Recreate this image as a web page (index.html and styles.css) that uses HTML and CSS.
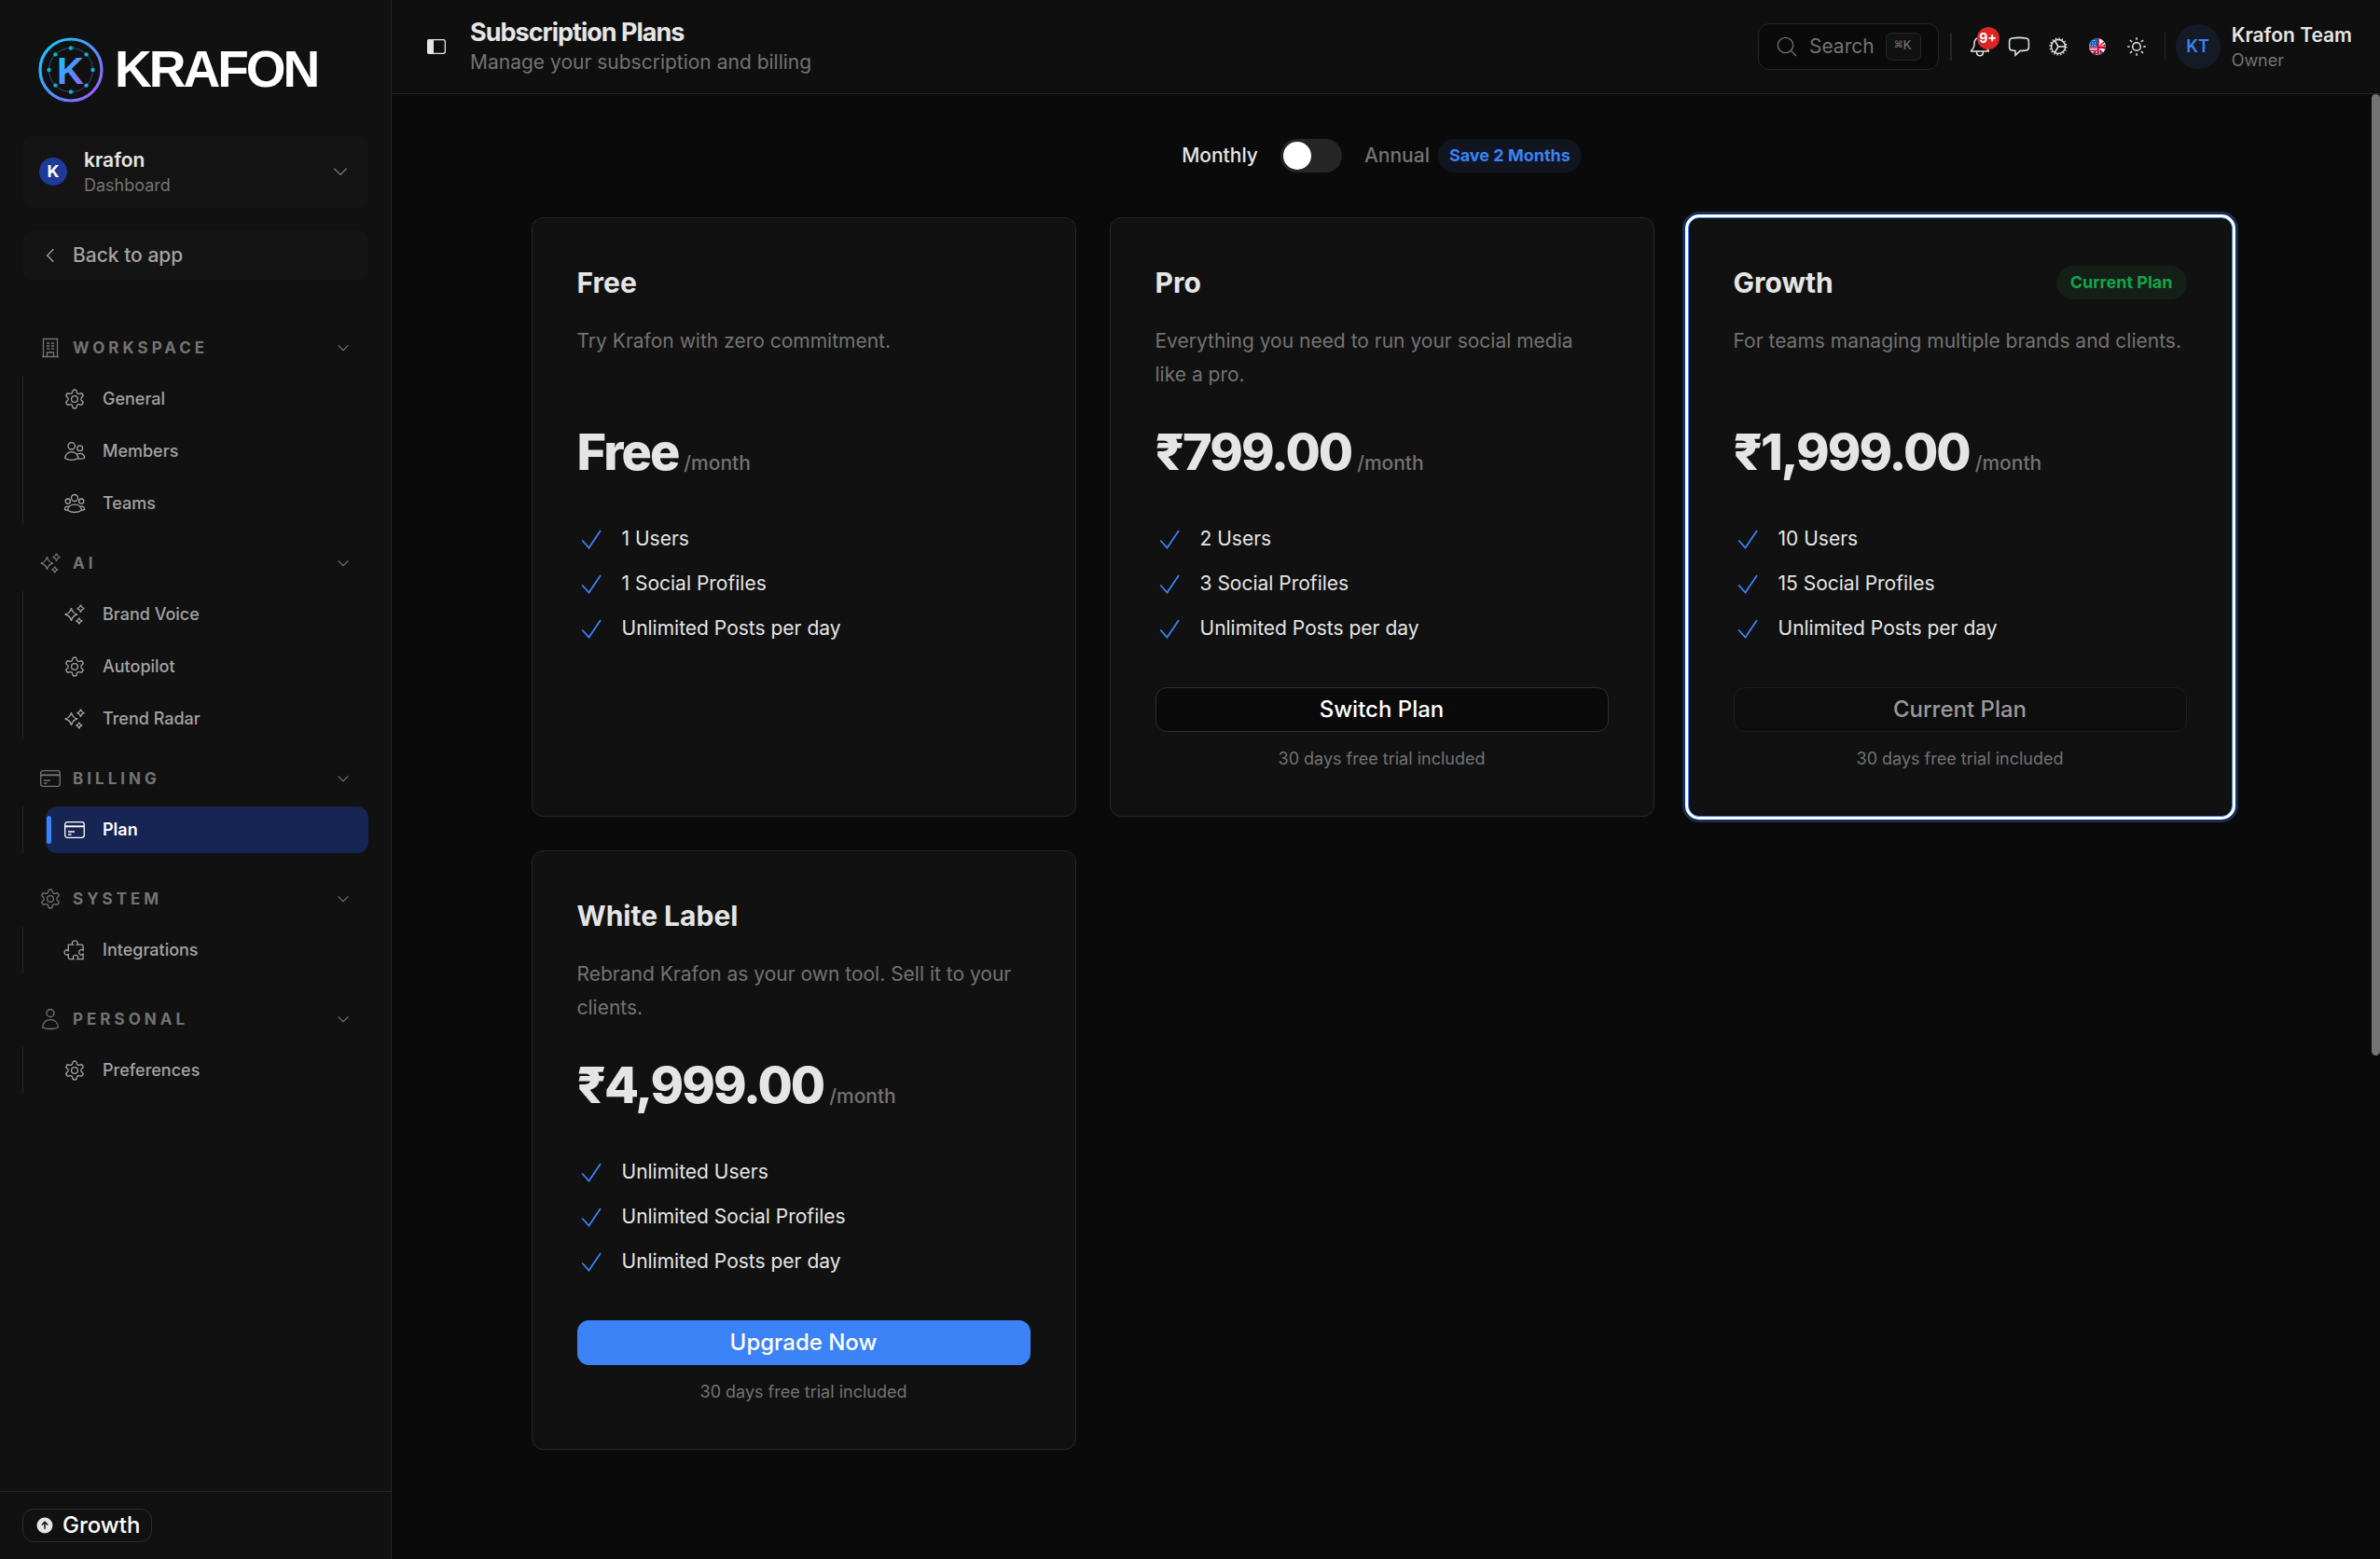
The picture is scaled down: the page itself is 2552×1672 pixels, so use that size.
FILE: index.html
```html
<!DOCTYPE html>
<html lang="en">
<head>
<meta charset="utf-8">
<meta name="viewport" content="width=device-width, initial-scale=1">
<title>Subscription Plans</title>
<link rel="stylesheet" href="styles.css">
</head>
<body>
<svg class="sprite" aria-hidden="true">
  <defs>
    <linearGradient id="brand" x1="0" y1="0" x2="1" y2="1">
      <stop offset="0" stop-color="#06d6ff"/><stop offset=".5" stop-color="#4d94ff"/><stop offset="1" stop-color="#a855f7"/>
    </linearGradient>
    <clipPath id="round"><circle cx="12" cy="12" r="9"/></clipPath>
  </defs>
  <symbol id="cog" viewBox="0 0 24 24"><path d="M12.22 2h-.44a2 2 0 0 0-2 2v.18a2 2 0 0 1-1 1.73l-.43.25a2 2 0 0 1-2 0l-.15-.08a2 2 0 0 0-2.73.73l-.22.38a2 2 0 0 0 .73 2.73l.15.1a2 2 0 0 1 1 1.72v.51a2 2 0 0 1-1 1.74l-.15.09a2 2 0 0 0-.73 2.73l.22.38a2 2 0 0 0 2.73.73l.15-.08a2 2 0 0 1 2 0l.43.25a2 2 0 0 1 1 1.73V20a2 2 0 0 0 2 2h.44a2 2 0 0 0 2-2v-.18a2 2 0 0 1 1-1.73l.43-.25a2 2 0 0 1 2 0l.15.08a2 2 0 0 0 2.73-.73l.22-.39a2 2 0 0 0-.73-2.73l-.15-.08a2 2 0 0 1-1-1.74v-.5a2 2 0 0 1 1-1.74l.15-.09a2 2 0 0 0 .73-2.73l-.22-.38a2 2 0 0 0-2.73-.73l-.15.08a2 2 0 0 1-2 0l-.43-.25a2 2 0 0 1-1-1.73V4a2 2 0 0 0-2-2z"/><circle cx="12" cy="12" r="3.4"/></symbol>
  <symbol id="building" viewBox="0 0 24 24"><path d="M4.500 21.500v-19h15v19M3 21.500h18M8.500 21.500V17h7v4.500M12 17v-1.500"/><path d="M8 7h3.200M13 7h3.200M8 10h3.200M13 10h3.200M8 13h3.200M13 13h3.200"/></symbol>
  <symbol id="members" viewBox="0 0 24 24"><circle cx="8.700" cy="6.300" r="3.700"/><path d="M1.800 19.500c0-4 3-6.800 7-6.800s7 2.800 7 6.800c-2 1.200-4.500 1.800-7 1.800s-5-.6-7-1.800z"/><circle cx="17.700" cy="8.700" r="2.900"/><path d="M14.600 15.200c4-1.800 8-.2 8 4-1.800 1-4.200 1.200-6.800.7"/></symbol>
  <symbol id="teams" viewBox="0 0 24 24"><circle cx="12" cy="6" r="3.500"/><circle cx="4.800" cy="9.600" r="2.600"/><circle cx="19.200" cy="9.600" r="2.600"/><path d="M4.500 19.200c.5-3.600 3.500-6 7.500-6s7 2.400 7.500 6c-2 1.600-4.700 2.300-7.500 2.300s-5.500-.7-7.500-2.300z"/><path d="M5.800 14.800c-2.700 0-4.400 1.400-4.400 3.600.9.6 1.900.9 3.100.9M18.200 14.800c2.700 0 4.400 1.400 4.400 3.600-.9.600-1.900.9-3.100.9"/></symbol>
  <symbol id="sparkles" viewBox="0 0 24 24"><path d="M8.500 5c.8 4.400 2.400 6.100 6.500 7-4.100.9-5.700 2.600-6.500 7-.8-4.400-2.400-6.100-6.800-7 4.400-.9 6-2.600 6.800-7zM18.500 1.500c.5 2.600 1.300 3.600 4 4.100-2.700.5-3.500 1.500-4 4.200-.5-2.700-1.300-3.700-4-4.200 2.700-.5 3.500-1.500 4-4.100zM16.800 15.500c.4 2.100 1.100 2.900 3.400 3.400-2.300.5-3 1.300-3.400 3.500-.4-2.200-1.100-3-3.400-3.500 2.300-.5 3-1.300 3.400-3.400z"/></symbol>
  <symbol id="card" viewBox="0 0 24 24"><rect x="1.700" y="3.700" width="20.600" height="16.600" rx="2.500"/><path d="M1.700 8.300h20.600" stroke-width="1.900"/><path d="M5 14h7M5 17h3.500"/></symbol>
  <symbol id="puzzle" viewBox="0 0 24 24"><path d="M5.300 6.200h4.900C8.600 4.500 9.600 1.800 12.300 1.800s3.700 2.700 2.100 4.400h5.100c.9 0 1.600.7 1.600 1.600v4.400c-1.600-1.500-4.400-.7-4.400 2s2.800 3.500 4.400 2v5.400h-6.200c1.500-1.700.7-4.200-1.900-4.200s-3.400 2.500-1.900 4.200H6.900c-.9 0-1.600-.7-1.600-1.600v-3.400c-1.600 1.200-4.200.6-4.200-2.100s2.600-3.500 4.200-2z"/></symbol>
  <symbol id="person" viewBox="0 0 24 24"><circle cx="12" cy="5.500" r="4"/><path d="M3.700 21c0-5 3.300-8.300 8.300-8.300s8.300 3.300 8.300 8.300c-2.400 1-5.200 1.500-8.300 1.500s-5.900-.5-8.300-1.500z"/></symbol>
  <symbol id="down" viewBox="0 0 24 24"><path d="M4 8l8 8 8-8"/></symbol>
  <symbol id="left" viewBox="0 0 24 24"><path d="M16 4l-8 8 8 8"/></symbol>
  <symbol id="check" viewBox="0 0 24 24"><path d="M2.200 13.500l7.300 8L22 3"/></symbol>
</svg>

<div class="app">
  <aside class="sidebar">
    <a class="brand" href="#">
      <svg class="brand-mark" viewBox="0 0 70 70" aria-hidden="true">
        <circle cx="35" cy="35" r="33" fill="none" stroke="url(#brand)" stroke-width="3.200"/>
        <circle cx="35" cy="35" r="23.500" fill="none" stroke="url(#brand)" stroke-width="1" opacity=".45"/>
        <g fill="#06b6d4"><circle cx="35" cy="11.500" r="2.200"/><circle cx="35" cy="58.500" r="2.200"/><circle cx="11.500" cy="35" r="2.200"/><circle cx="58.500" cy="35" r="2.200"/><circle cx="18.400" cy="18.400" r="2.200"/><circle cx="51.600" cy="18.400" r="2.200"/><circle cx="18.400" cy="51.600" r="2.200"/><circle cx="51.600" cy="51.600" r="2.200"/></g>
        <text class="brand-letter" x="20" y="50" fill="url(#brand)">K</text>
      </svg>
      <span class="brand-name">KRAFON</span>
    </a>

    <button class="workspace" type="button">
      <span class="workspace-avatar">K</span>
      <span class="stack"><strong class="workspace-name">krafon</strong><span class="caption">Dashboard</span></span>
      <svg class="icon icon-20 muted"><use href="#down"/></svg>
    </button>

    <a class="back" href="#"><svg class="icon icon-20"><use href="#left"/></svg>Back to app</a>

    <nav class="nav" aria-label="Settings">
      <section class="group group-long">
        <button class="group-head" type="button"><svg class="icon"><use href="#building"/></svg><span>WORKSPACE</span><svg class="icon icon-16"><use href="#down"/></svg></button>
        <div class="group-list">
          <a class="item" href="#"><svg class="icon"><use href="#cog"/></svg>General</a>
          <a class="item" href="#"><svg class="icon"><use href="#members"/></svg>Members</a>
          <a class="item" href="#"><svg class="icon"><use href="#teams"/></svg>Teams</a>
        </div>
      </section>
      <section class="group group-long">
        <button class="group-head" type="button"><svg class="icon"><use href="#sparkles"/></svg><span>AI</span><svg class="icon icon-16"><use href="#down"/></svg></button>
        <div class="group-list">
          <a class="item" href="#"><svg class="icon"><use href="#sparkles"/></svg>Brand Voice</a>
          <a class="item" href="#"><svg class="icon"><use href="#cog"/></svg>Autopilot</a>
          <a class="item" href="#"><svg class="icon"><use href="#sparkles"/></svg>Trend Radar</a>
        </div>
      </section>
      <section class="group">
        <button class="group-head" type="button"><svg class="icon"><use href="#card"/></svg><span>BILLING</span><svg class="icon icon-16"><use href="#down"/></svg></button>
        <div class="group-list">
          <a class="item item-active" href="#" aria-current="page"><svg class="icon"><use href="#card"/></svg>Plan</a>
        </div>
      </section>
      <section class="group">
        <button class="group-head" type="button"><svg class="icon"><use href="#cog"/></svg><span>SYSTEM</span><svg class="icon icon-16"><use href="#down"/></svg></button>
        <div class="group-list">
          <a class="item" href="#"><svg class="icon"><use href="#puzzle"/></svg>Integrations</a>
        </div>
      </section>
      <section class="group">
        <button class="group-head" type="button"><svg class="icon"><use href="#person"/></svg><span>PERSONAL</span><svg class="icon icon-16"><use href="#down"/></svg></button>
        <div class="group-list">
          <a class="item" href="#"><svg class="icon"><use href="#cog"/></svg>Preferences</a>
        </div>
      </section>
    </nav>

    <div class="sidebar-foot">
      <a class="plan-pill" href="#">
        <svg class="plan-pill-icon" viewBox="0 0 18 18" aria-hidden="true"><circle cx="9" cy="9" r="8.500" fill="#e5e5e5"/><path d="M9 12.800V5.500M5.800 8.500L9 5.300l3.200 3.200" fill="none" stroke="#111" stroke-width="1.500"/></svg>
        Growth
      </a>
    </div>
  </aside>

  <div class="content">
    <header class="topbar">
      <button class="plain" type="button" aria-label="Toggle sidebar">
        <svg class="panel-icon" viewBox="0 0 20 16"><rect x=".7" y=".7" width="18.600" height="14.600" rx="2" fill="none" stroke="#e5e5e5" stroke-width="1.300"/><path d="M0 2a2 2 0 0 1 2-2h5v16H2a2 2 0 0 1-2-2z" fill="#e5e5e5"/></svg>
      </button>
      <div class="heading">
        <h1 class="title">Subscription Plans</h1>
        <p class="subtitle">Manage your subscription and billing</p>
      </div>
      <button class="search" type="button">
        <svg class="icon" viewBox="0 0 24 24"><circle cx="10.500" cy="10.500" r="8.200"/><path d="M16.500 16.500l5.500 5.500"/></svg>
        <span>Search</span>
        <kbd class="kbd">⌘K</kbd>
      </button>
      <span class="divider divider-wide"></span>
      <div class="tools">
        <button class="plain tool" type="button" aria-label="Notifications">
          <svg class="icon" viewBox="0 0 24 24"><path d="M12 2.500c-3.800 0-6 2.500-6 6.200 0 3.900-1.300 5.800-3.200 7.300v1h18.400v-1c-1.900-1.500-3.200-3.400-3.200-7.300 0-3.700-2.200-6.200-6-6.200zM8.500 17.500c0 2.500 1.500 4.200 3.500 4.200s3.500-1.700 3.500-4.200"/></svg>
          <span class="count">9+</span>
        </button>
        <button class="plain tool" type="button" aria-label="Messages">
          <svg class="icon" viewBox="0 0 24 24"><path d="M4.500 2.900c5-.7 10-.7 15 0 1.700.2 2.900 1.600 2.900 3.300v6.600c0 1.700-1.200 3.100-2.900 3.300-2 .3-4.200.5-6.500.5l-5 4.700v-4.800c-1.200 0-2.400-.2-3.500-.4-1.700-.2-2.900-1.600-2.900-3.300V6.200c0-1.700 1.200-3.100 2.900-3.300z"/></svg>
        </button>
        <button class="plain tool" type="button" aria-label="Settings">
          <svg class="icon" viewBox="0 0 24 24"><circle cx="12" cy="12" r="7.500"/><circle cx="12" cy="12" r="8.900" stroke-width="1.400" stroke-dasharray="1.400 2.100"/><path d="M12 12h7.500M12 12L8.200 5.500M12 12l-3.800 6.500"/></svg>
        </button>
        <button class="plain tool" type="button" aria-label="Language: English">
          <svg class="flag" viewBox="0 0 24 24"><g clip-path="url(#round)"><path d="M0 0h24v24H0z" fill="#f5f5f5"/><path d="M3 3h9v9H3zM14.500 3H21v4zM22 8.500v2.500h-5zM14.500 21h6l-6-4.500zM22 15.500V14h-4zM10.500 16v6L5 20z" fill="#0a56b5"/><path d="M12 3h1.800v18H12zM12 11.500h9V14h-9zM3 12.500h9v1.500H3zM3 15.500h9v1.500H3zM3 18.500h9V20H3z" fill="#d80027"/><path d="M15 10.800L21.500 5M14.500 15.500l6 5.500" stroke="#d80027" stroke-width="1.400"/><path d="M5 5.500h6M3.500 8h7M3.500 10.500h7" stroke="#fff" stroke-width="1.200" stroke-dasharray="1.200 1.600"/></g></svg>
        </button>
        <button class="plain tool" type="button" aria-label="Theme">
          <svg class="icon" viewBox="0 0 24 24"><circle cx="12" cy="12" r="4.300"/><path d="M12 2.200v2.600M12 19.200v2.600M2.200 12h2.600M19.200 12h2.600M5 5l2 2M17 17l2 2M5 19l2-2M17 7l2-2" stroke-width="1.600"/></svg>
        </button>
      </div>
      <span class="divider"></span>
      <button class="plain account" type="button">
        <span class="account-avatar">KT</span>
        <span class="stack"><strong class="account-name">Krafon Team</strong><span class="caption">Owner</span></span>
      </button>
    </header>

    <main class="main">
      <div class="billing">
        <label for="cycle">Monthly</label>
        <input class="switch" type="checkbox" role="switch" id="cycle">
        <div class="annual"><label for="cycle" class="muted">Annual</label><span class="badge badge-blue">Save 2 Months</span></div>
      </div>

      <div class="plans">
        <article class="plan">
          <header class="plan-head"><h2 class="plan-name">Free</h2></header>
          <p class="plan-text">Try Krafon with zero commitment.</p>
          <p class="price"><strong class="amount">Free</strong><span class="period">/month</span></p>
          <ul class="features">
            <li><svg class="check"><use href="#check"/></svg>1 Users</li>
            <li><svg class="check"><use href="#check"/></svg>1 Social Profiles</li>
            <li><svg class="check"><use href="#check"/></svg>Unlimited Posts per day</li>
          </ul>
        </article>

        <article class="plan">
          <header class="plan-head"><h2 class="plan-name">Pro</h2></header>
          <p class="plan-text">Everything you need to run your social media like a pro.</p>
          <p class="price"><strong class="amount">₹799.00</strong><span class="period">/month</span></p>
          <ul class="features">
            <li><svg class="check"><use href="#check"/></svg>2 Users</li>
            <li><svg class="check"><use href="#check"/></svg>3 Social Profiles</li>
            <li><svg class="check"><use href="#check"/></svg>Unlimited Posts per day</li>
          </ul>
          <button class="action" type="button">Switch Plan</button>
          <p class="trial">30 days free trial included</p>
        </article>

        <article class="plan plan-current">
          <header class="plan-head"><h2 class="plan-name">Growth</h2><span class="badge badge-green">Current Plan</span></header>
          <p class="plan-text">For teams managing multiple brands and clients.</p>
          <p class="price"><strong class="amount">₹1,999.00</strong><span class="period">/month</span></p>
          <ul class="features">
            <li><svg class="check"><use href="#check"/></svg>10 Users</li>
            <li><svg class="check"><use href="#check"/></svg>15 Social Profiles</li>
            <li><svg class="check"><use href="#check"/></svg>Unlimited Posts per day</li>
          </ul>
          <button class="action" type="button" disabled>Current Plan</button>
          <p class="trial">30 days free trial included</p>
        </article>

        <article class="plan">
          <header class="plan-head"><h2 class="plan-name">White Label</h2></header>
          <p class="plan-text">Rebrand Krafon as your own tool. Sell it to your clients.</p>
          <p class="price"><strong class="amount">₹4,999.00</strong><span class="period">/month</span></p>
          <ul class="features">
            <li><svg class="check"><use href="#check"/></svg>Unlimited Users</li>
            <li><svg class="check"><use href="#check"/></svg>Unlimited Social Profiles</li>
            <li><svg class="check"><use href="#check"/></svg>Unlimited Posts per day</li>
          </ul>
          <button class="action action-primary" type="button">Upgrade Now</button>
          <p class="trial">30 days free trial included</p>
        </article>
      </div>
      <span class="scroll-thumb"></span>
    </main>
  </div>
</div>
</body>
</html>
```
FILE: styles.css
```css
* { box-sizing: border-box; }

body {
  margin: 0;
  background: #0a0a0a;
  color: #e5e5e5;
  font-family: Inter, "Liberation Sans", sans-serif;
  font-size: 21px;
  line-height: 30px;
}

h1, h2, p, ul { margin: 0; padding: 0; }
a { color: inherit; text-decoration: none; }
button { font: inherit; color: inherit; cursor: pointer; }

.sprite { position: absolute; width: 0; height: 0; }

.icon {
  flex: none;
  width: 24px;
  height: 24px;
  fill: none;
  stroke: currentColor;
  stroke-width: 1.3;
}
.icon-20 { width: 20px; height: 20px; stroke-width: 1.6; }
.icon-16 { width: 16px; height: 16px; stroke-width: 1.8; }
.muted { color: #737373; }

.plain { padding: 0; border: 0; background: none; }
.stack { display: flex; flex-direction: column; text-align: left; }
.caption { color: #737373; font-size: 18px; line-height: 24px; }

.app { display: flex; min-height: 100vh; }

/* Sidebar */
.sidebar {
  display: flex;
  flex: none;
  flex-direction: column;
  width: 420px;
  border-right: 1px solid #262626;
  background: #111;
}

.brand {
  display: flex;
  align-items: center;
  gap: 12px;
  padding: 40px 40px 35px 41px;
}
.brand-mark { flex: none; width: 70px; height: 70px; }
.brand-letter { font: bold 40px "Liberation Sans", sans-serif; }
.brand-name {
  margin-bottom: 2px;
  color: #fff;
  font: bold 55px/68px "Liberation Sans", sans-serif;
  letter-spacing: -3px;
}

.workspace {
  display: flex;
  align-items: center;
  gap: 18px;
  margin: 0 24px 24px;
  padding: 12px 20px 12px 18px;
  border: 0;
  border-radius: 12px;
  background: #141414;
}
.workspace .stack { flex: 1; }
.workspace-name { font-weight: 600; }
.workspace-avatar {
  width: 30px;
  height: 30px;
  border-radius: 50%;
  background: #1e3a9a;
  color: #fff;
  font-size: 18px;
  font-weight: 700;
}

.back {
  display: flex;
  align-items: center;
  gap: 14px;
  margin: 0 24px 54px;
  padding: 12px 20px;
  border-radius: 12px;
  background: #141414;
  color: #a3a3a3;
  font-weight: 500;
}

.nav { flex: 1; }
.group { margin-bottom: 31px; }
.group-long { margin-bottom: 21px; }
.group-head {
  display: flex;
  align-items: center;
  gap: 12px;
  width: 100%;
  height: 36px;
  margin-bottom: 12px;
  padding: 0 43px 0 42px;
  border: 0;
  background: none;
  color: #737373;
  font-size: 17px;
  font-weight: 700;
  letter-spacing: 4px;
  text-align: left;
}
.group-head span { flex: 1; }
.group-list {
  position: relative;
  display: flex;
  flex-direction: column;
  gap: 6px;
  padding: 0 24px 0 49px;
}
.group-list::before {
  content: "";
  position: absolute;
  top: 0;
  bottom: 0;
  left: 24px;
  width: 1px;
  background: #262626;
}
.group-long .group-list::before { bottom: 3px; }
.item {
  position: relative;
  display: flex;
  align-items: center;
  gap: 18px;
  padding: 10px 19px;
  border-radius: 12px;
  color: #a3a3a3;
  font-size: 18px;
  font-weight: 500;
}
.item-active {
  background: #172554;
  color: #fff;
  font-weight: 600;
}
.item-active::before {
  content: "";
  position: absolute;
  top: 10px;
  left: 1px;
  width: 5px;
  height: 30px;
  border-radius: 3px;
  background: #3b82f6;
}

.sidebar-foot {
  display: flex;
  padding: 18px 24px;
  border-top: 1px solid #262626;
}
.plan-pill {
  display: flex;
  align-items: center;
  gap: 10px;
  padding: 2px 12px 2px 14px;
  border: 1px solid #2e2e2e;
  border-radius: 12px;
  color: #fff;
  font-size: 24px;
  font-weight: 500;
}
.plan-pill-icon { width: 18px; height: 18px; }

/* Top bar */
.content { display: flex; flex: 1; flex-direction: column; min-width: 0; }
.topbar {
  display: flex;
  align-items: center;
  height: 101px;
  padding: 0 30px 0 38px;
  border-bottom: 1px solid #262626;
  background: #0f0f0f;
}
.panel-icon { display: block; width: 20px; height: 16px; }
.heading { flex: 1; margin-left: 26px; }
.title {
  font-size: 27px;
  font-weight: 700;
  line-height: 34px;
  letter-spacing: -1px;
}
.subtitle { color: #737373; }

.search {
  display: flex;
  align-items: center;
  height: 50px;
  padding: 0 18px;
  border: 1px solid #262626;
  border-radius: 12px;
  background: #0a0a0a;
  color: #737373;
}
.search span { margin: 0 12px; }
.kbd {
  width: 38px;
  border: 1px solid #262626;
  border-radius: 6px;
  background: #111;
  font: 15px/28px "Liberation Mono", monospace;
  text-align: center;
}
.divider { width: 1px; height: 30px; background: #262626; }
.divider-wide { width: 2px; margin-left: 12px; }
.tools { display: flex; gap: 18px; margin: 0 18px; }
.tool { position: relative; display: block; width: 24px; height: 24px; }
.tool .icon, .flag { display: block; width: 24px; height: 24px; stroke-width: 1.5; }
.count {
  position: absolute;
  top: -9px;
  left: 9px;
  width: 24px;
  height: 24px;
  border-radius: 50%;
  background: #dc2626;
  color: #fff;
  font-size: 14px;
  font-weight: 700;
  line-height: 24px;
  text-align: center;
}
.account { display: flex; align-items: center; gap: 12px; margin-left: 11px; }
.account-avatar {
  width: 48px;
  height: 48px;
  border-radius: 50%;
  background: #141b27;
  color: #3b82f6;
  font-size: 18px;
  font-weight: 600;
  line-height: 48px;
}
.account-name { font-weight: 600; }

/* Plans */
.main {
  position: relative;
  flex: 1;
  padding: 48px 69px 48px 60px;
}
.billing {
  display: flex;
  align-items: center;
  justify-content: center;
  gap: 24px;
  margin-bottom: 48px;
  font-weight: 500;
}
.annual { display: flex; align-items: center; gap: 9px; }
.switch {
  appearance: none;
  width: 66px;
  height: 36px;
  margin: 0;
  padding: 3px;
  border-radius: 18px;
  background: #262626;
}
.switch::before {
  content: "";
  display: block;
  width: 30px;
  height: 30px;
  border-radius: 50%;
  background: #fff;
}
.switch:checked::before { margin-left: auto; }

.badge {
  padding: 3px 12px;
  border-radius: 18px;
  font-size: 18px;
  font-weight: 700;
}
.badge-blue { background: #101520; color: #3b82f6; }
.badge-green { padding: 3px 15px; background: #141f18; color: #16a34a; }

.plans {
  display: grid;
  grid-template-columns: repeat(3, minmax(0, 1fr));
  gap: 36px;
  max-width: 1824px;
  margin: 0 auto;
}
.plan {
  padding: 48px;
  border: 1px solid #262626;
  border-radius: 12px;
  background: #111;
}
.plan-current {
  border-color: #3b82f6;
  box-shadow: 0 0 0 3px #fff, 0 0 0 6px #1a2f56;
}
.plan-head {
  display: flex;
  align-items: center;
  justify-content: space-between;
  margin-bottom: 24px;
}
.plan-name { font-size: 30px; font-weight: 700; line-height: 42px; }
.plan-text { min-height: 72px; color: #737373; line-height: 36px; }
.price {
  display: flex;
  align-items: baseline;
  gap: 6px;
  margin: 35px 0 33px;
  line-height: 60px;
}
.amount { font-size: 54px; font-weight: 800; letter-spacing: -2px; }
.period { color: #737373; font-weight: 500; }
.features {
  display: flex;
  flex-direction: column;
  gap: 12px;
  list-style: none;
  line-height: 36px;
}
.features li { display: flex; align-items: center; gap: 21px; }
.check {
  width: 24px;
  height: 24px;
  margin-left: 3px;
  fill: none;
  stroke: #3b82f6;
  stroke-width: 1.8;
}
.action {
  display: block;
  width: 100%;
  height: 48px;
  margin: 45px 0 15px;
  padding: 0;
  border: 1px solid #2e2e2e;
  border-radius: 12px;
  background: #0a0a0a;
  color: #fff;
  font-size: 24px;
  font-weight: 500;
}
.action:disabled { border-color: #1e1e1e; background: #0e0e0e; color: #999; cursor: default; }
.action-primary { border-color: #3b82f6; background: #3b82f6; }
.trial {
  color: #737373;
  font-size: 18px;
  line-height: 27px;
  text-align: center;
}

.scroll-thumb {
  position: absolute;
  top: 0;
  right: 0;
  width: 9px;
  height: calc(66% - 6px);
  border-radius: 5px;
  background: #737373;
}
```
